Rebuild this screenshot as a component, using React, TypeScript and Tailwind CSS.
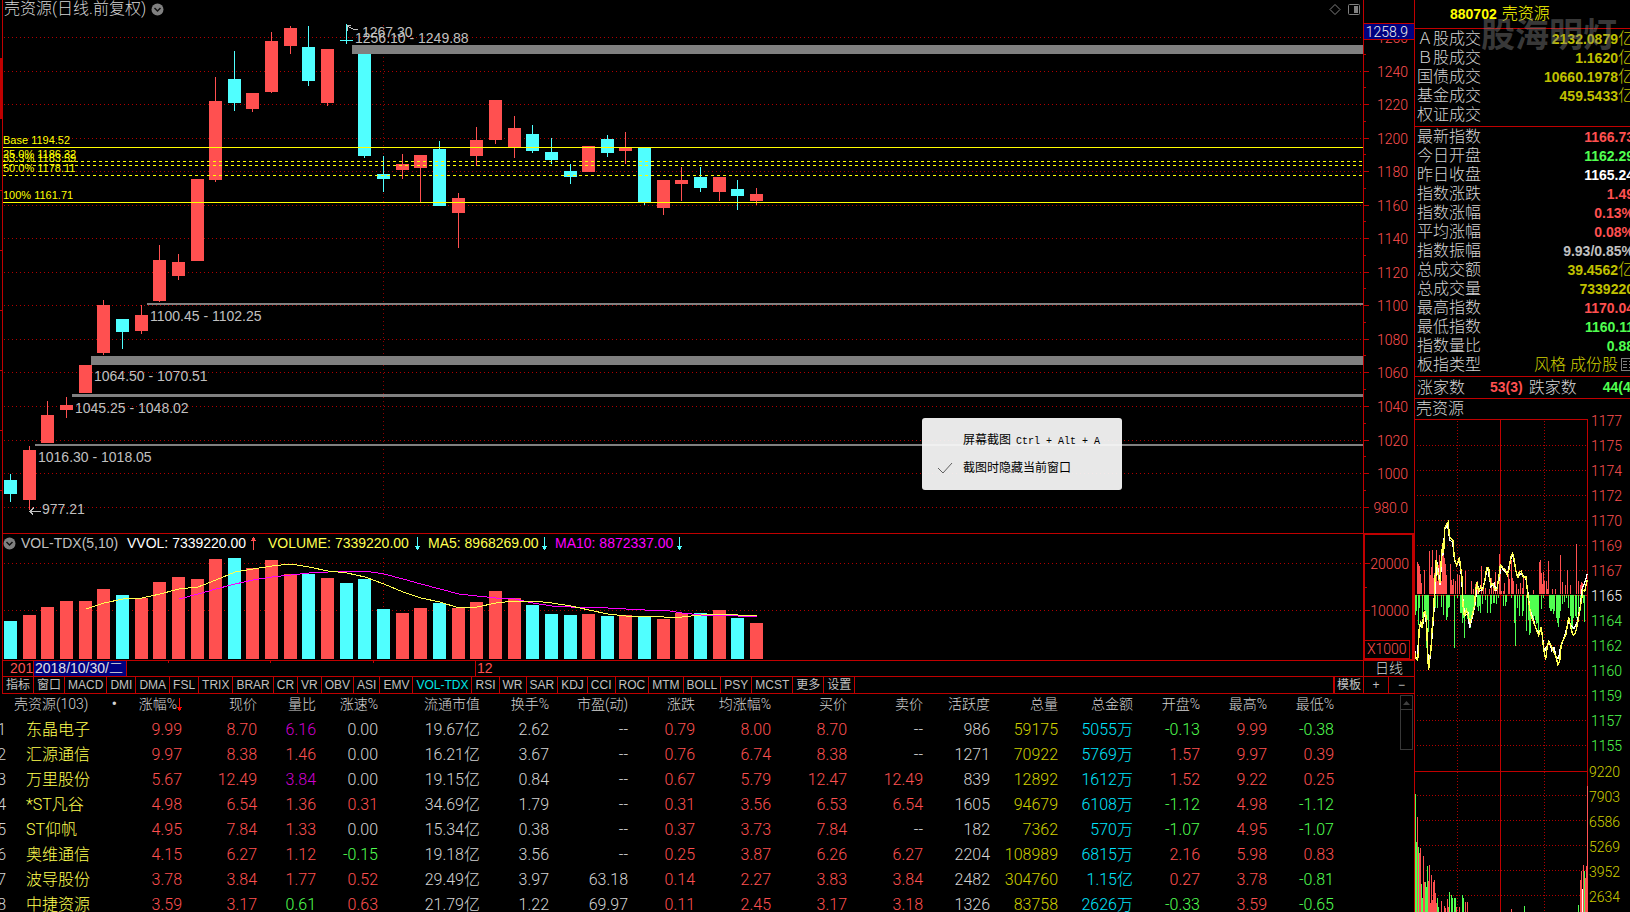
import React, { useState } from 'react';

const RED = '#ff5050';
const CYAN = '#50ffff';
const LINE = '#c00000';
const DOT = '#b00000';

// [top, bottom, high, low, up?, volume top]
const CANDLES: [number, number, number, number, number, number][] = [
  [480, 494, 474, 502, 0, 621], [450, 500, 446, 510, 1, 615], [415, 443, 401, 443, 1, 607], [405, 410, 397, 418, 1, 601],
  [365, 393, 365, 393, 1, 601], [305, 353, 300, 355, 1, 589], [319, 332, 319, 349, 0, 595], [315, 331, 305, 334, 1, 598],
  [260, 301, 245, 302, 1, 582], [262, 276, 254, 280, 1, 577], [179, 261, 179, 261, 1, 579], [101, 180, 77, 182, 1, 559],
  [79, 103, 51, 111, 0, 558], [93, 109, 93, 112, 1, 568], [41, 92, 32, 93, 1, 560], [28, 46, 26, 54, 1, 574],
  [47, 81, 26, 86, 0, 574], [49, 103, 49, 106, 1, 578], [40, 41, 24, 44, 0, 583], [54, 156, 54, 158, 0, 579],
  [174, 179, 156, 192, 0, 609], [164, 170, 154, 179, 1, 613], [155, 168, 155, 202, 1, 608], [149, 206, 141, 206, 0, 603],
  [198, 213, 193, 248, 1, 608], [140, 156, 127, 166, 1, 602], [100, 140, 100, 144, 1, 591], [128, 147, 116, 158, 1, 598],
  [134, 151, 125, 153, 0, 605], [152, 160, 138, 164, 0, 614], [171, 177, 164, 184, 0, 615], [146, 172, 146, 172, 1, 614],
  [139, 153, 135, 157, 0, 616], [147, 151, 132, 164, 1, 615], [147, 202, 147, 205, 0, 616], [180, 208, 180, 215, 1, 619],
  [180, 184, 167, 201, 1, 613], [177, 188, 167, 192, 0, 613], [177, 192, 177, 201, 1, 610], [189, 196, 180, 210, 0, 618],
  [194, 201, 188, 205, 1, 623],
];

const MA5 = [609, 603, 599, 598, 594, 589, 587, 580, 572, 569, 566, 564, 567, 571, 573, 577, 584, 592, 598, 602, 608, 607, 603, 601, 601, 603, 606, 610, 614, 616, 616, 617, 617, 615, 614, 615, 616];
const MA10 = [599, 594, 589, 584, 580, 577, 575, 573, 572, 571, 571, 574, 579, 584, 589, 594, 596, 598, 599, 603, 606, 607, 607, 608, 609, 610, 610, 613, 615, 615, 616, 616];

const AXIS: [string, number][] = [
  ['1240', 71], ['1220', 104], ['1200', 138], ['1180', 171], ['1160', 205], ['1140', 238], ['1120', 272],
  ['1100', 305], ['1080', 339], ['1060', 372], ['1040', 406], ['1020', 440], ['1000', 473], ['980.0', 507],
];

// gap zones: x, y, height, label, label x, baseline
const GAPS: [number, number, number, string, number, number][] = [
  [352, 45, 9, '1256.10 - 1249.88', 355, 43],
  [147, 303, 2, '1100.45 - 1102.25', 150, 321],
  [91, 356, 9, '1064.50 - 1070.51', 94, 381],
  [72, 394, 3, '1045.25 - 1048.02', 75, 413],
  [35, 444, 2, '1016.30 - 1018.05', 38, 462],
];

const FIBO: [string, number, number, boolean][] = [
  ['Base 1194.52', 147, 144, false],
  ['25.0% 1186.32', 161, 158, true],
  ['33.3% 1183.59', 165, 162, true],
  ['50.0% 1178.11', 175, 172, true],
  ['100% 1161.71', 202, 199, false],
];

const TABS = ['指标', '窗口', 'MACD', 'DMI', 'DMA', 'FSL', 'TRIX', 'BRAR', 'CR', 'VR', 'OBV', 'ASI', 'EMV', 'VOL-TDX', 'RSI', 'WR', 'SAR', 'KDJ', 'CCI', 'ROC', 'MTM', 'BOLL', 'PSY', 'MCST', '更多', '设置'];

const COLS = ['现价', '量比', '涨速%', '流通市值', '换手%', '市盈(动)', '涨跌', '均涨幅%', '买价', '卖价', '活跃度', '总量', '总金额', '开盘%', '最高%', '最低%'];

const ROWS = [
  ['东晶电子', '9.99', '8.70', '6.16', '0.00', '19.67亿', '2.62', '--', '0.79', '8.00', '8.70', '--', '986', '59175', '5055万', '-0.13', '9.99', '-0.38'],
  ['汇源通信', '9.97', '8.38', '1.46', '0.00', '16.21亿', '3.67', '--', '0.76', '6.74', '8.38', '--', '1271', '70922', '5769万', '1.57', '9.97', '0.39'],
  ['万里股份', '5.67', '12.49', '3.84', '0.00', '19.15亿', '0.84', '--', '0.67', '5.79', '12.47', '12.49', '839', '12892', '1612万', '1.52', '9.22', '0.25'],
  ['*ST凡谷', '4.98', '6.54', '1.36', '0.31', '34.69亿', '1.79', '--', '0.31', '3.56', '6.53', '6.54', '1605', '94679', '6108万', '-1.12', '4.98', '-1.12'],
  ['ST仰帆', '4.95', '7.84', '1.33', '0.00', '15.34亿', '0.38', '--', '0.37', '3.73', '7.84', '--', '182', '7362', '570万', '-1.07', '4.95', '-1.07'],
  ['奥维通信', '4.15', '6.27', '1.12', '-0.15', '19.18亿', '3.56', '--', '0.25', '3.87', '6.26', '6.27', '2204', '108989', '6815万', '2.16', '5.98', '0.83'],
  ['波导股份', '3.78', '3.84', '1.77', '0.52', '29.49亿', '3.97', '63.18', '0.14', '2.27', '3.83', '3.84', '2482', '304760', '1.15亿', '0.27', '3.78', '-0.81'],
  ['中捷资源', '3.59', '3.17', '0.61', '0.63', '21.79亿', '1.22', '69.97', '0.11', '2.45', '3.17', '3.18', '1326', '83758', '2626万', '-0.33', '3.59', '-0.65'],
];

const cellColor = (col: number, v: string) => {
  if (col === 0) return 'text-[#ffff50]';
  if (v === '--' || v === '0.00' || [5, 6, 7, 12].includes(col)) return 'text-[#d4d4d4]';
  if (col === 13) return 'text-[#d0d000]';
  if (col === 14) return 'text-[#00e6ff]';
  if (col === 3) {
    if (Number(v) > 3) return 'text-[#d000d0]';
    return Number(v) < 1 ? 'text-[#50ff50]' : 'text-[#ff5050]';
  }
  return v.startsWith('-') ? 'text-[#50ff50]' : 'text-[#ff5050]';
};

const TURNOVER: [string, string][] = [
  ['Ａ股成交', '2132.0879亿'], ['Ｂ股成交', '1.1620亿'], ['国债成交', '10660.1978亿'], ['基金成交', '459.5433亿'], ['权证成交', ''],
];

const QUOTES: [string, string, string][] = [
  ['最新指数', '1166.73', 'text-[#ff5050]'],
  ['今日开盘', '1162.29', 'text-[#50ff50]'],
  ['昨日收盘', '1165.24', 'text-white'],
  ['指数涨跌', '1.49', 'text-[#ff5050]'],
  ['指数涨幅', '0.13%', 'text-[#ff5050]'],
  ['平均涨幅', '0.08%', 'text-[#ff5050]'],
  ['指数振幅', '9.93/0.85%', 'text-[#c0c0c0]'],
  ['总成交额', '39.4562亿', 'text-[#c0c000]'],
  ['总成交量', '7339220', 'text-[#c0c000]'],
  ['最高指数', '1170.04', 'text-[#ff5050]'],
  ['最低指数', '1160.11', 'text-[#50ff50]'],
  ['指数量比', '0.88', 'text-[#50ff50]'],
];

const TREND = '5,395 12,432 17,436 20,400 21,345 26,318 30,340 36,292 40,290 44,318 47,430 50,465 53,425 56,418 60,345 65,290 68,210 72,135 75,150 80,190 84,205 88,130 92,85 95,115 98,38 104,28 109,20 112,62 116,70 123,75 127,130 134,150 142,127 145,150 150,185 153,270 157,305 163,285 168,300 175,322 182,295 188,270 190,235 195,200 200,230 206,215 212,225 218,200 224,157 230,158 236,210 242,205 249,225 255,222 260,190 265,150 272,158 280,165 286,180 292,160 296,125 302,115 306,130 311,165 317,190 322,170 328,168 334,188 342,185 346,225 350,260 356,298 362,315 370,335 380,362 388,335 394,395 401,435 405,400 410,380 418,392 425,412 432,425 438,450 443,440 448,385 456,370 462,360 466,330 470,305 478,345 484,362 490,355 495,335 501,300 508,260 513,225 518,230 522,210 526,195';
const AVG = '5,370 10,425 16,430 21,350 26,322 31,338 37,296 42,310 48,425 51,455 58,395 66,285 70,210 74,140 78,160 84,210 90,115 94,118 98,42 107,30 113,75 122,82 128,140 136,148 142,132 149,190 154,275 161,300 168,295 173,338 180,310 188,275 196,210 203,228 212,222 219,195 226,155 237,215 247,205 252,228 261,195 267,155 280,172 286,178 297,130 303,122 312,170 318,185 327,175 342,190 348,235 353,282 362,308 372,340 381,355 389,345 397,410 404,395 412,382 420,408 426,398 433,428 440,430 446,395 452,380 460,355 470,318 480,335 487,340 496,320 504,280 511,220 517,205 522,190 526,176';

const UP: [number, number][] = [
  [2, 32], [3, 30], [4, 28], [5, 20], [6, 11], [9, 24], [14, 43], [15, 19], [16, 27], [17, 44], [18, 16], [19, 21], [21, 44], [22, 13], [23, 29], [24, 39], [25, 11], [26, 13], [27, 40], [28, 46], [29, 36], [30, 30], [31, 19], [35, 30], [36, 14], [37, 9], [38, 15], [40, 13], [42, 20], [44, 19], [47, 13], [50, 23], [56, 13], [58, 5], [60, 10], [62, 13], [66, 28], [68, 11], [70, 6], [74, 5], [76, 16], [78, 10], [80, 22], [82, 13], [84, 40], [85, 29], [86, 3], [88, 3], [89, 11], [93, 20], [94, 15], [96, 34], [97, 16], [98, 13], [101, 10], [103, 5], [105, 11], [107, 6], [108, 16], [118, 4], [124, 32], [125, 34], [126, 21], [127, 10], [128, 22], [129, 13], [131, 13], [132, 5], [133, 33], [137, 5], [140, 5], [145, 39], [147, 12], [150, 9], [152, 24], [155, 9], [161, 50], [163, 13], [165, 9], [166, 12], [167, 11],
];
const DOWN: [number, number][] = [
  [0, 20], [1, 16], [3, 30], [4, 13], [7, 23], [9, 15], [10, 23], [11, 53], [12, 25], [13, 37], [20, 13], [22, 13], [26, 12], [28, 20], [31, 25], [32, 22], [33, 13], [34, 12], [39, 53], [42, 3], [45, 18], [46, 18], [47, 28], [48, 23], [49, 43], [50, 16], [51, 16], [52, 24], [53, 25], [54, 33], [55, 33], [56, 23], [57, 20], [58, 13], [60, 11], [62, 12], [63, 16], [64, 11], [65, 18], [67, 9], [70, 5], [72, 18], [75, 18], [76, 9], [78, 8], [79, 8], [81, 9], [83, 3], [88, 11], [90, 11], [91, 7], [96, 3], [99, 28], [100, 51], [102, 13], [104, 21], [107, 21], [108, 16], [111, 36], [113, 25], [114, 40], [115, 38], [116, 22], [117, 23], [118, 26], [119, 21], [120, 25], [121, 29], [122, 28], [123, 38], [126, 14], [128, 3], [134, 13], [135, 16], [136, 16], [137, 14], [138, 19], [139, 16], [141, 23], [142, 28], [143, 32], [144, 23], [145, 16], [147, 9], [149, 7], [151, 3], [153, 13], [155, 21], [156, 33], [157, 34], [158, 23], [160, 21], [161, 23], [163, 19], [165, 16], [166, 8], [168, 8], [169, 27],
];
const MINUTE_VOL: [number, number, string][] = [
  [0, 118, 'g'], [1, 70, 'g'], [2, 95, 'r'], [3, 65, 'g'], [4, 59, 'r'], [5, 64, 'r'], [6, 28, 'g'], [7, 14, 'g'], [8, 56, 'r'], [9, 30, 'r'], [10, 30, 'g'], [11, 25, 'g'], [12, 46, 'g'], [13, 31, 'r'], [14, 47, 'r'], [15, 9, 'r'], [16, 37, 'r'], [17, 12, 'r'], [18, 30, 'r'], [19, 32, 'r'], [20, 19, 'r'], [21, 9, 'r'], [22, 14, 'g'], [23, 5, 'g'], [26, 11, 'r'], [29, 6, 'r'], [30, 4, 'r'], [32, 13, 'r'], [33, 5, 'r'], [34, 20, 'g'], [36, 17, 'g'], [37, 14, 'g'], [39, 14, 'g'], [40, 14, 'g'], [41, 5, 'r'], [44, 5, 'r'], [47, 17, 'g'], [48, 14, 'g'], [50, 10, 'r'], [52, 10, 'r'], [96, 3, 'r'], [109, 6, 'g'], [163, 7, 'g'], [165, 32, 'r'], [166, 41, 'r'], [167, 23, 'w'], [168, 47, 'r'], [169, 41, 'g'], [170, 34, 'r'], [171, 46, 'r'], [172, 126, 'r'],
];
const VOL_COLOR: Record<string, string> = { r: RED, g: '#50ff50', w: '#ffffff' };

const PRICE_LABELS = ['1177', '1175', '1174', '1172', '1170', '1169', '1167', '1165', '1164', '1162', '1160', '1159', '1157', '1155'];
const VOL_LABELS = ['9220', '7903', '6586', '5269', '3952', '2634'];

const barX = (i: number) => 4 + Math.round(i * 18.65);
const maPoints = (values: number[], from: number) => values.map((y, i) => `${barX(i + from) + 7},${y}`).join(' ');

const DropIcon: React.FC = () => (
  <svg width="13" height="13" viewBox="0 0 13 13">
    <circle cx="6.5" cy="6.5" r="6" fill="#808080" />
    <path d="M3.5 5l3 3 3-3" fill="none" stroke="#101010" strokeWidth="1.5" />
  </svg>
);

const Arrow: React.FC<{ up?: boolean; color: string }> = ({ up, color }) => (
  <svg width="5" height="13" viewBox="0 0 5 13" shapeRendering="crispEdges" className="shrink-0">
    <g transform={up ? undefined : 'rotate(180 2.5 6.5)'} fill={color}>
      <rect x="2" y="0" width="1" height="13" />
      <rect x="1" y="1" width="3" height="2" />
      <rect x="0" y="3" width="5" height="1" />
    </g>
  </svg>
);

const MainChart: React.FC = () => (
  <svg className="block h-[515px] w-full font-['Liberation_Sans'] font-normal" fontSize="14">
    <g transform="translate(-3 -18)" shapeRendering="crispEdges">
      {[37, ...AXIS.map(a => a[1])].map(y => (
        <line key={y} x1="4" x2="101%" y1={y + 0.5} y2={y + 0.5} stroke={DOT} strokeDasharray="1 3" />
      ))}
      <line x1="383.5" x2="383.5" y1="25" y2="518" stroke="#900000" strokeDasharray="1 3" />
      {GAPS.map(g => (
        <rect key={g[0]} x={g[0]} y={g[1]} width="100%" height={g[2]} fill="#808080" />
      ))}
      {CANDLES.map(([top, bottom, high, low, up], i) => (
        <g key={i} fill={up ? RED : CYAN}>
          <rect x={barX(i)} y={top} width="13" height={bottom - top} />
          <rect x={barX(i) + 6} y={high} width="1" height={low - high} />
        </g>
      ))}
      <g fill="#c0c0c0">
        {GAPS.map(g => (
          <text key={g[3]} x={g[4]} y={g[5]}>{g[3]}</text>
        ))}
        <text x="362" y="37">1267.30</text>
        <text x="42" y="514">977.21</text>
      </g>
      <path d="M30 511.5h11M34 507.5l-4 4 3 3M347 31v-6h4M347 26l6 3 5 1" fill="none" stroke="#c0c0c0" />
      {FIBO.map(([label, y, base, dashed]) => (
        <g key={label}>
          <line x1="3" x2="101%" y1={y + 0.5} y2={y + 0.5} stroke="#ffff00" strokeDasharray={dashed ? '3 3' : undefined} />
          <text x="3" y={base} fontSize="11" fill="#ffff00">{label}</text>
        </g>
      ))}
    </g>
  </svg>
);

const VolumeChart: React.FC = () => (
  <svg className="block h-[108px] w-full">
    <g transform="translate(-3 -552)" shapeRendering="crispEdges">
      {[563, 610].map(y => (
        <line key={y} x1="4" x2="101%" y1={y + 0.5} y2={y + 0.5} stroke={DOT} strokeDasharray="1 3" />
      ))}
      <line x1="383.5" x2="383.5" y1="558" y2="659" stroke={DOT} strokeDasharray="1 3" />
      {CANDLES.map((c, i) => (
        <rect key={i} x={barX(i)} y={c[5]} width="13" height={659 - c[5]} fill={c[4] ? RED : CYAN} />
      ))}
      <polyline points={maPoints(MA10, 9)} fill="none" stroke="#ff00ff" />
      <polyline points={maPoints(MA5, 4)} fill="none" stroke="#ffff50" />
    </g>
  </svg>
);

const PriceAxis: React.FC = () => (
  <svg className="block h-[533px] w-full" fontSize="14" fill={RED} textAnchor="end">
    <text x="44" y="43">1260</text>
    {AXIS.map(([label, y]) => (
      <g key={label}>
        <rect x="0" y={y} width="5" height="1" fill={LINE} />
        <rect x="0" y={y - 17} width="2" height="1" fill={LINE} />
        <text x="44" y={y + 6}>{label}</text>
      </g>
    ))}
    <rect x="0" y="23" width="100%" height="17" fill={LINE} />
    <rect x="0" y="24" width="100%" height="15" fill="#000080" />
    <text x="44" y="37" fill="#f0f0f0">1258.9</text>
  </svg>
);

const VolumeAxis: React.FC = () => (
  <div className="flex h-full flex-col items-start border border-l-0 border-r-2 border-[#c00000]">
    <svg className="block h-[105px] w-full" fontSize="14" fill={RED} textAnchor="end">
      <text x="44" y="34">20000</text>
      <text x="44" y="81">10000</text>
      <rect x="0" y="28" width="5" height="1" fill={LINE} />
      <rect x="0" y="52" width="2" height="1" fill={LINE} />
      <rect x="0" y="75" width="5" height="1" fill={LINE} />
    </svg>
    <span className="h-[19px] border border-l-0 border-[#c00000] px-[2px] text-[14px] leading-[17px] text-[#ff5050]">X1000</span>
  </div>
);

const IntradayChart: React.FC = () => (
  <svg className="block min-h-[493px] w-full flex-1 overflow-visible" fontSize="14">
    <g shapeRendering="crispEdges">
      {[445, 470, 495, 520, 545, 570, 620, 645, 670, 695, 720, 745, 795, 820, 845, 870, 895].map(y => (
        <line key={y} x1="2" x2="172" y1={y - 418.5} y2={y - 418.5} stroke={DOT} strokeDasharray="1 2" />
      ))}
      <g fill={LINE}>
        <rect x="0" y="0" width="173" height="1" />
        <rect x="0" y="176" width="173" height="1" />
        <rect x="0" y="352" width="173" height="1" />
        <rect x="85" y="0" width="1" height="493" />
        <rect x="172" y="0" width="1" height="493" />
      </g>
      <path d="M42.5 2V493M129.5 2V493" stroke={DOT} strokeDasharray="1 2" />
      {UP.map(([x, h]) => <rect key={x} x={x} y={175 - h} width="1" height={h} fill={RED} />)}
      {DOWN.map(([x, h]) => <rect key={x} x={x} y="176" width="1" height={h} fill="#50ff50" />)}
      {MINUTE_VOL.map(([x, h, c]) => <rect key={x} x={x} y={493 - h} width="1" height={h} fill={VOL_COLOR[c]} />)}
    </g>
    <g transform="translate(-3 96) scale(.3333)" fill="none" strokeWidth="4" shapeRendering="crispEdges">
      <polyline points={AVG} stroke="#ffffff" />
      <polyline points={TREND} stroke="#ffff50" />
    </g>
    {PRICE_LABELS.map((p, i) => (
      <text key={p} x="176" y={7 + i * 25} fill={i < 7 ? RED : i === 7 ? '#ffffff' : '#50ff50'}>{p}</text>
    ))}
    {VOL_LABELS.map((p, i) => (
      <text key={p} x="174" y={358 + i * 25} fill="#d0d000">{p}</text>
    ))}
  </svg>
);

const CaptureMenu: React.FC = () => {
  const [hideWindow, setHideWindow] = useState(true);
  return (
    <div className="absolute left-[922px] top-[418px] h-[72px] w-[200px] rounded-[3px] bg-[#f6f6f6]/94 pt-2 text-[12px] font-normal text-black">
      <button className="block h-[28px] w-full pl-[41px] text-left">
        屏幕截图 <span className="ml-[2px] font-['Liberation_Mono'] text-[10px]">Ctrl + Alt + A</span>
      </button>
      <label className="flex h-[28px] items-center pl-[15px]">
        <input type="checkbox" className="sr-only" checked={hideWindow} onChange={e => setHideWindow(e.target.checked)} />
        <svg width="16" height="12" viewBox="0 0 16 12" fill="none" stroke="#606060" className="mr-[10px]">
          {hideWindow && <path d="M1 6l5 5L15 1" />}
        </svg>
        截图时隐藏当前窗口
      </label>
    </div>
  );
};

const SidePanel: React.FC = () => (
  <aside className="relative flex w-[216px] shrink-0 flex-col overflow-hidden border-l border-[#c00000] text-[16px]">
    <h2 className="flex h-[28px] items-center gap-[5px] pl-[35px] text-[#ffff00]">
      <b className="font-['Liberation_Sans'] text-[14px] font-bold">880702</b> 壳资源
    </h2>
    <dl className="-mr-[4px] border-t border-[#c00000] pb-[2px]">
      {TURNOVER.map(([k, v]) => (
        <div key={k} className="flex h-[19px] items-center justify-between pl-[2px]">
          <dt>{k}</dt>
          <dd className="text-[#c0c000]">
            <b className="font-['Liberation_Sans'] text-[14px] font-bold">{v.replace('亿', '')}</b>{v && '亿'}
          </dd>
        </div>
      ))}
    </dl>
    <dl className="-mr-[4px] border-t border-[#c00000] pb-[2px]">
      {QUOTES.map(([k, v, color]) => (
        <div key={k} className="flex h-[19px] items-center justify-between pl-[2px]">
          <dt>{k}</dt>
          <dd className={color}>
            <b className="font-['Liberation_Sans'] text-[14px] font-bold">{v.replace('亿', '')}</b>{v.includes('亿') && '亿'}
          </dd>
        </div>
      ))}
      <div className="flex h-[19px] items-center justify-between pl-[2px]">
        <dt>板指类型</dt>
        <dd className="flex items-center gap-[3px] text-[#d0d000]">
          风格 成份股
          <svg width="13" height="13" viewBox="0 0 13 13" fill="none" stroke="#808080" shapeRendering="crispEdges">
            <path d="M13 .5H.5v12H13M2 3.5h4M2 6.500h4M2 9.500h4M8 3.500h5M8 6.500h5M8 9.500h5" />
          </svg>
        </dd>
      </div>
    </dl>
    <div className="flex h-[23px] items-center whitespace-nowrap border-y border-[#c00000] pl-[2px]">
      涨家数
      <b className="ml-[25px] mr-[6px] font-['Liberation_Sans'] text-[14px] font-bold text-[#ff5050]">53(3)</b>
      跌家数
      <b className="ml-[26px] font-['Liberation_Sans'] text-[14px] font-bold text-[#50ff50]">44(41)</b>
    </div>
    <h3 className="h-[20px] pl-px leading-[20px]">壳资源</h3>
    <IntradayChart />
    <span className="pointer-events-none absolute left-[66px] top-[12px] text-[34px] font-bold leading-[46px] text-[#808080]/45">股海明灯</span>
  </aside>
);

const App: React.FC = () => (
  <div className="flex h-screen w-full overflow-hidden bg-black font-['Roboto','Noto_Sans_CJK_SC',sans-serif] font-light text-[#d4d4d4]">
    <main className="relative flex min-w-0 flex-1 flex-col overflow-hidden">
      <div className="flex shrink-0">
        <svg className="block h-[694px] w-[2px]">
          <rect y="58" width="2" height="61" fill={LINE} />
          {[190, 250, 310, 370, 430, 490].map(y => <rect key={y} y={y} width="2" height="1" fill={LINE} />)}
        </svg>
        <div className="min-w-0 flex-1 border-l border-[#c00000]">
          <div className="flex">
            <div className="min-w-0 flex-1">
              <div className="flex h-[18px] items-center whitespace-nowrap pl-px pr-[3px]">
                <h1 className="text-[16px] leading-[20px]">壳资源(日线.前复权)</h1>
                <button aria-label="周期" className="ml-[5px]"><DropIcon /></button>
                <svg width="32" height="13" viewBox="0 0 32 13" fill="none" stroke="#808080" className="ml-auto">
                  <path d="M7 1.500l5 5-5 5-5-5z" />
                  <rect x="20.500" y="1.500" width="11" height="10" rx="1" />
                  <rect x="26" y="3" width="4" height="7" fill="#808080" stroke="none" />
                </svg>
              </div>
              <MainChart />
            </div>
            <div className="w-[51px] shrink-0 border-l border-[#c00000]"><PriceAxis /></div>
          </div>

          <div className="flex h-[127px] border-t border-[#c00000]">
            <div className="min-w-0 flex-1">
              <div className="flex h-[18px] items-center whitespace-nowrap font-['Liberation_Sans'] text-[14px] font-normal">
                <button aria-label="指标参数" className="mr-[5px]"><DropIcon /></button>
                <span className="w-[106px] text-[#c0c0c0]">VOL-TDX(5,10)</span>
                <span className="w-[124px] text-white">VVOL: 7339220.00</span>
                <Arrow up color={RED} />
                <span className="ml-[12px] w-[147px] text-[#ffff50]">VOLUME: 7339220.00</span>
                <Arrow color={CYAN} />
                <span className="ml-[8px] w-[114px] text-[#ffff50]">MA5: 8968269.00</span>
                <Arrow color={CYAN} />
                <span className="ml-[8px] w-[122px] text-[#ff00ff]">MA10: 8872337.00</span>
                <Arrow color={CYAN} />
              </div>
              <VolumeChart />
            </div>
            <div className="w-[51px] shrink-0 border-l-2 border-[#c00000]"><VolumeAxis /></div>
          </div>

          <div className="flex h-[16px] whitespace-nowrap border-t border-[#c00000] font-['Liberation_Sans','Noto_Sans_CJK_SC'] text-[14px] leading-[15px]">
            <span className="w-[30px] overflow-hidden pl-[7px] text-[#ff5050]">201</span>
            <span className="w-[94px] border-x border-[#c00000] bg-[#000080] pl-px text-[#e0e0e0]">2018/10/30/二</span>
            <svg className="block h-[15px] w-[348px]">
              {[41, 143, 246].map(x => <rect key={x} x={x} width="1" height="2" fill={LINE} />)}
            </svg>
            <span className="flex-1 border-l border-[#c00000] pl-px text-[#ff5050]">12</span>
            <span className="w-[51px] border-l border-[#c00000] text-center">日线</span>
          </div>

          <div className="flex h-[18px] whitespace-nowrap border-y border-[#c00000] font-['Liberation_Sans','Noto_Sans_CJK_SC'] text-[12px] font-normal leading-[16px] text-[#c0c0c0]">
            {TABS.map(t => (
              <button key={t} className={`shrink-0 border-r border-[#c00000] px-[3px] ${t === 'VOL-TDX' ? 'text-[#00e6e6]' : ''}`}>{t}</button>
            ))}
            <button className="ml-auto w-[30px] border-l-2 border-[#c00000]">模板</button>
            <button aria-label="放大" className="w-[25px] border-l border-[#c00000]">+</button>
            <button aria-label="缩小" className="w-[26px] border-l border-[#c00000]">−</button>
          </div>
        </div>
      </div>

      <div className="-ml-[3px] flex">
        <table className="w-full flex-1 table-fixed text-right text-[16px]">
          <colgroup>
            <col className="w-[9px]" />
            <col className="w-[116px]" />
            <col className="w-[60px]" />
            <col className="w-[75px]" />
            <col className="w-[59px]" />
            <col className="w-[62px]" />
            <col className="w-[102px]" />
            <col className="w-[69px]" />
            <col className="w-[79px]" />
            <col className="w-[67px]" />
            <col className="w-[76px]" />
            <col className="w-[76px]" />
            <col className="w-[76px]" />
            <col className="w-[67px]" />
            <col className="w-[68px]" />
            <col className="w-[75px]" />
            <col className="w-[67px]" />
            <col className="w-[67px]" />
            <col className="w-[67px]" />
            <col />
          </colgroup>
          <thead>
            <tr className="h-[23px] whitespace-nowrap align-top text-[14px] leading-[20px]">
              <th />
              <th className="pl-[8px] text-left font-light">壳资源(103) <span className="ml-[20px] font-bold">•</span></th>
              <th className="font-light">
                <span className="flex items-center justify-end">涨幅%<Arrow color="#ff0000" /></span>
              </th>
              {COLS.map(c => <th key={c} className="font-light">{c}</th>)}
              <th />
            </tr>
          </thead>
          <tbody>
            {ROWS.map((row, i) => (
              <tr key={row[0]} className="h-[25px] leading-[25px]">
                <td>{i + 1}</td>
                {row.map((v, c) => (
                  <td key={c} className={`${cellColor(c, v)} ${c === 0 ? 'pl-[20px] text-left' : ''}`}>{v}</td>
                ))}
                <td />
              </tr>
            ))}
          </tbody>
        </table>
        <div className="mr-px mt-px h-[55px] w-[13px] shrink-0 border border-[#383838]">
          <button aria-label="向上" className="flex h-[14px] w-full items-center justify-center border-b border-[#383838]">
            <svg width="7" height="4" viewBox="0 0 7 4" fill="#404040"><path d="M3.500 0L7 4H0z" /></svg>
          </button>
        </div>
      </div>
      <CaptureMenu />
    </main>
    <SidePanel />
  </div>
);

export default App;
